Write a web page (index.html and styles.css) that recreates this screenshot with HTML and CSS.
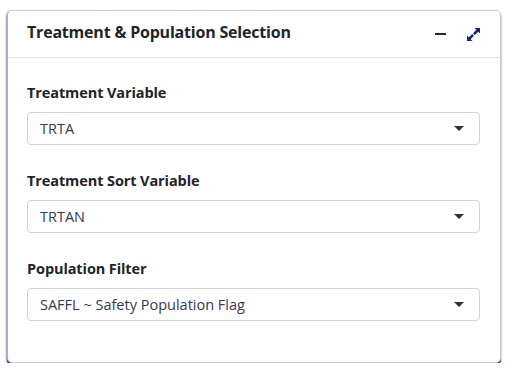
FILE: index.html
```html
<!DOCTYPE html>
<html>
<head>
<meta charset="utf-8">
<link rel="stylesheet" href="styles.css">
</head>
<body>
<div class="card">
  <div class="card-header">
    <h3 class="card-title">Treatment &amp; Population Selection</h3>
    <div class="tools">
      <svg class="icon" width="12" height="12" viewBox="0 0 12 12"><rect x="0" y="5" width="11" height="2" fill="#1b2a4e"/></svg>
      <svg class="icon expand" width="15" height="15" viewBox="0 0 15 15">
        <path d="M14 1 L8.5 1 L10.3 2.8 L7 6.2 L8.8 8 L12.2 4.7 L14 6.5 Z" fill="#142a6e"/>
        <path d="M1 14 L6.5 14 L4.7 12.2 L8 8.8 L6.2 7 L2.8 10.3 L1 8.5 Z" fill="#142a6e"/>
      </svg>
    </div>
  </div>
  <div class="card-body">
    <div class="field">
      <label class="label">Treatment Variable</label>
      <div class="select"><span>TRTA</span><span class="caret"></span></div>
    </div>
    <div class="field">
      <label class="label">Treatment Sort Variable</label>
      <div class="select"><span>TRTAN</span><span class="caret"></span></div>
    </div>
    <div class="field">
      <label class="label">Population Filter</label>
      <div class="select"><span>SAFFL ~ Safety Population Flag</span><span class="caret"></span></div>
    </div>
  </div>
</div>
</body>
</html>
```
FILE: styles.css
```css
html, body {
  margin: 0;
  background: #ffffff;
}
body {
  padding: 10px 13px 0 7px;
  font-family: "Source Sans Pro", "Open Sans", "Liberation Sans", sans-serif;
  color: #212529;
}
.card {
  border: 1px solid #c9ccd6;
  border-left-color: #a9b0c8;
  border-radius: 5px;
  box-shadow: 0 2px 1px #1c2757, -1px 1px 2px rgba(40,50,110,0.35), 0 3px 3px rgba(40,50,110,0.25);
  background: #fff;
}
.card-header {
  display: flex;
  align-items: center;
  justify-content: space-between;
  height: 47px;
  padding: 0 19px 4px 19px;
  box-sizing: border-box;
  border-bottom: 1px solid #dee2e6;
}
.card-title {
  margin: 0;
  font-size: 16px;
  line-height: 22px;
  font-weight: 700;
  letter-spacing: -0.2px;
  color: #212529;
}
.tools {
  display: flex;
  align-items: center;
  gap: 19px;
  margin-top: 4px;
}
.card-body {
  padding: 25px 20px 41px 19px;
  display: flex;
  flex-direction: column;
  gap: 26px;
}
.label {
  display: block;
  font-size: 14.5px;
  line-height: 20px;
  font-weight: 700;
  margin-bottom: 9px;
  letter-spacing: -0.1px;
}
.select {
  height: 33px;
  box-sizing: border-box;
  border: 1px solid #ced4da;
  border-radius: 4px;
  display: flex;
  align-items: center;
  justify-content: space-between;
  padding: 0 15px 0 12px;
  font-size: 14.5px;
  color: #343a55;
}
.caret {
  width: 0;
  height: 0;
  border-left: 5px solid transparent;
  border-right: 5px solid transparent;
  border-top: 5px solid #333;
}
```
